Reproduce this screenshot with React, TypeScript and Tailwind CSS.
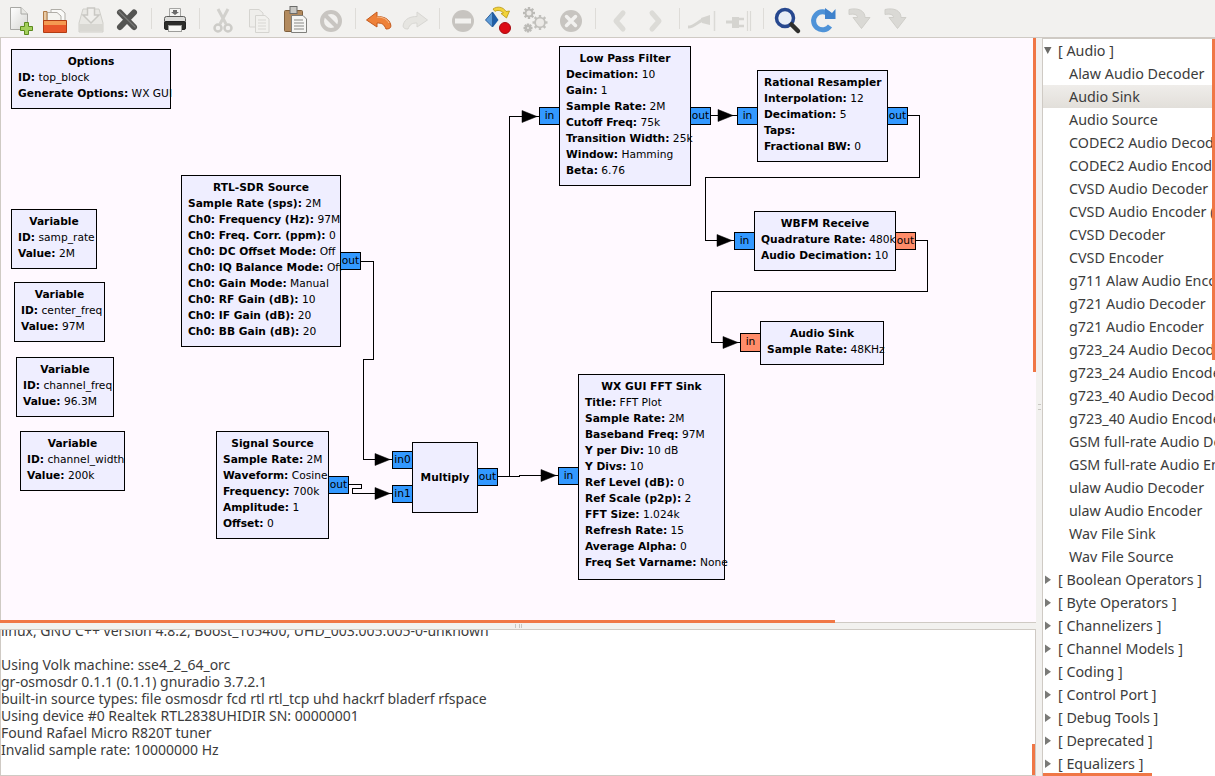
import React from "react";

const S = ({ children }: { children: React.ReactNode }) => (
  <svg width="32" height="32" viewBox="0 0 32 32" className="shrink-0">{children}</svg>
);

const gear = (cx: number, cy: number, r: number, color: string) => {
  const teeth = [0, 45, 90, 135, 180, 225, 270, 315];
  return (
    <g>
      {teeth.map((a) => (
        <rect key={a} x={cx - 1.2} y={cy - r - 2} width="2.400" height="3" fill={color} transform={`rotate(${a} ${cx} ${cy})`} />
      ))}
      <circle cx={cx} cy={cy} r={r - 0.6} fill="#eceae7" stroke={color} strokeWidth="1.800" />
    </g>
  );
};

const curved = (
  <S>
    <path d="M6 6.500C15 4.500 22 7.500 22 14.500H27L18.500 25.500L10 14.500H14.500C14.500 11.500 11 10.500 6 11.500Z" fill="#dad9d5" stroke="#cfcec9" strokeLinejoin="round" />
  </S>
);

const icons: Record<string, React.ReactNode> = {
  new: (
    <S>
      <defs>
        <linearGradient id="pg" x1="0" y1="0" x2="1" y2="1"><stop offset="0" stopColor="#ffffff" /><stop offset="1" stopColor="#d6d6d2" /></linearGradient>
      </defs>
      <path d="M7.500 4.500H18L24.500 11V26.500H7.500Z" fill="url(#pg)" stroke="#a8a8a4" />
      <path d="M18 4.500V11H24.500" fill="#e8e8e4" stroke="#a8a8a4" />
      <path d="M21.500 19.500H25.500V23.500H29.500V27.500H25.500V31.500H21.500V27.500H17.500V23.500H21.500Z" fill="#a4cf5c" stroke="#5c8a1e" />
    </S>
  ),
  open: (
    <S>
      <path d="M12 6.500H22L26 10V20H12Z" fill="#fafaf8" stroke="#b0aea8" />
      <path d="M8 9.500H18L22 13V20H8Z" fill="#f4f4f0" stroke="#b0aea8" />
      <path d="M4.500 8.500H8V18H4.500Z" fill="#e8c9a4" stroke="#b07a45" />
      <path d="M4.500 17.500H27.500V29.500H4.500Z" fill="#e8562a" stroke="#b23c14" />
      <path d="M5 18H27V22H5Z" fill="#f49a52" />
    </S>
  ),
  save: (
    <S>
      <path d="M8 6H24L28 20V29H4V20Z" fill="#e9e8e4" stroke="#d0cfca" />
      <path d="M4 21H28V28H4Z" fill="#d9d8d3" />
      <path d="M12.500 5V12H8L16 20L24 12H19.500V5Z" fill="#f0efec" stroke="#c9c8c3" strokeWidth="1.500" />
    </S>
  ),
  close: (
    <S>
      <path d="M9 9.500L23 24M23 9.500L9 24" stroke="#555553" strokeWidth="6" strokeLinecap="round" />
      <path d="M8 8.500L24 24" stroke="#7a7a78" strokeWidth="1.200" strokeLinecap="round" />
    </S>
  ),
  print: (
    <S>
      <path d="M10.500 5.500H21.500V14H10.500Z" fill="#f4f4f2" stroke="#a6a6a4" />
      <path d="M14 7H18V9H20L16 12L12 9H14Z" fill="#6a6a6a" />
      <rect x="5.500" y="13.500" width="21" height="7" rx="2" fill="#dcdcda" stroke="#5c5c5a" />
      <rect x="5.500" y="18.500" width="21" height="8" rx="1.500" fill="#2d2d2b" stroke="#222" />
      <rect x="9.500" y="22.500" width="13" height="6" fill="#f7f7f5" stroke="#9c9c9a" />
    </S>
  ),
  cut: (
    <S>
      <path d="M11 6L19 21M21 6L13 21" stroke="#d2d1cd" strokeWidth="3" />
      <circle cx="11" cy="25" r="3.500" fill="none" stroke="#cdccc8" strokeWidth="2.500" />
      <circle cx="21" cy="25" r="3.500" fill="none" stroke="#cdccc8" strokeWidth="2.500" />
    </S>
  ),
  copy: (
    <S>
      <path d="M6.500 6.500H16L20 10V24H6.500Z" fill="#efeeeb" stroke="#d5d4d0" />
      <path d="M12.500 12.500H22L26 16V29.500H12.500Z" fill="#f2f1ee" stroke="#d5d4d0" />
      <path d="M15 17H23M15 20H23M15 23H23M15 26H23" stroke="#d8d7d3" />
    </S>
  ),
  paste: (
    <S>
      <rect x="5.500" y="7.500" width="18" height="21" rx="1" fill="#b28a5e" stroke="#7f5f3c" />
      <rect x="11" y="3.500" width="7" height="7" fill="#c9c8c4" stroke="#6c6c6a" />
      <path d="M12.500 12.500H24L27.500 16V29.500H12.500Z" fill="#f6f6f4" stroke="#80807c" />
      <path d="M15 17H24M15 20H25M15 23H25M15 26H25" stroke="#8a8a86" />
    </S>
  ),
  stop: (
    <S>
      <circle cx="16" cy="18" r="9" fill="none" stroke="#c8c5c1" strokeWidth="4" />
      <path d="M9.500 11.500L22.500 24.500" stroke="#c8c5c1" strokeWidth="4" />
    </S>
  ),
  undo: (
    <S>
      <path d="M14 9L3.500 17L14 24V20C19 20 21 21 23 26C27.500 26 28.500 24 27.500 21C26 16 21 13.500 14 13.500Z" fill="#ee8139" stroke="#c4591c" strokeLinejoin="round" />
      <path d="M14 14C20 14 24 16 26 20" fill="none" stroke="#f8c090" />
    </S>
  ),
  redo: (
    <S>
      <path d="M18 9L28.500 17L18 24V20C13 20 11 21 9 26C4.500 26 3.500 24 4.500 21C6 16 11 13.500 18 13.500Z" fill="#e6e5e1" stroke="#d8d7d3" strokeLinejoin="round" />
    </S>
  ),
  minus: (
    <S>
      <circle cx="16" cy="18" r="11" fill="#c7c4c0" />
      <rect x="8" y="15.500" width="16" height="5" fill="#f2f1ef" />
    </S>
  ),
  rotate: (
    <S>
      <path d="M2.500 17L9.500 9L9.500 24Z" fill="#5d9ad6" stroke="#2c5f9a" />
      <path d="M10 9L15.500 17L10 24Z" fill="#1f5ea8" />
      <path d="M10 6C14 3 20 3.500 23 8.500L26.500 8L23.500 15L18 10.500L20.500 10C18.500 7.500 14 6.500 12 8.500Z" fill="#f2d33b" stroke="#b8960e" strokeWidth=".8" />
      <circle cx="22" cy="25" r="5.500" fill="#dc0c14" stroke="#a60a10" />
    </S>
  ),
  gears: (
    <S>
      {gear(10, 10, 4, "#bcbbb7")}
      {gear(21, 19.500, 5.500, "#c2c1bd")}
      {gear(9, 25, 2.500, "#bcbbb7")}
    </S>
  ),
  stopx: (
    <S>
      <circle cx="16" cy="18" r="11" fill="#c7c4c0" />
      <path d="M11.500 13.500L20.500 22.500M20.500 13.500L11.500 22.500" stroke="#f2f1ef" strokeWidth="3.500" strokeLinecap="round" />
    </S>
  ),
  left: (
    <S>
      <path d="M20 10L13 18L20 26" fill="none" stroke="#dcdbd7" strokeWidth="5" strokeLinejoin="round" strokeLinecap="round" />
    </S>
  ),
  right: (
    <S>
      <path d="M13 10L20 18L13 26" fill="none" stroke="#dcdbd7" strokeWidth="5" strokeLinejoin="round" strokeLinecap="round" />
    </S>
  ),
  plug: (
    <S>
      <path d="M1 24C8 24 11 18 16 17" fill="none" stroke="#d5d4d0" strokeWidth="3" />
      <path d="M14 15L23 12V22L15 20Z" fill="#d5d4d0" />
      <path d="M27.500 8V28" stroke="#dbdad6" strokeWidth="1.500" />
    </S>
  ),
  unplug: (
    <S>
      <path d="M3 19H9" stroke="#d5d4d0" strokeWidth="3" />
      <path d="M9 14H16V25H9Z" fill="#d5d4d0" />
      <path d="M16 16H21M16 23H21" stroke="#d5d4d0" strokeWidth="2.500" />
      <path d="M24.500 8V28M27.500 8V28" stroke="#dbdad6" strokeWidth="1.200" />
    </S>
  ),
  find: (
    <S>
      <circle cx="14" cy="15" r="8.500" fill="#e9eef6" stroke="#27488f" strokeWidth="3.500" />
      <path d="M20.500 21.500L27 28" stroke="#2f2f2d" strokeWidth="4.500" strokeLinecap="round" />
    </S>
  ),
  refresh: (
    <S>
      <path d="M22 11.500A9 9 0 1 0 23 23" fill="none" stroke="#4f93d8" strokeWidth="5" />
      <path d="M18 5V16H28.500V6L25 10Z" fill="#3f82cc" />
    </S>
  ),
  down1: curved,
  down2: curved,
};

const toolbar: string[][] = [
  ["new", "open", "save", "close"],
  ["print"],
  ["cut", "copy", "paste", "stop"],
  ["undo", "redo"],
  ["minus", "rotate", "gears", "stopx"],
  ["left", "right"],
  ["plug", "unplug"],
  ["find", "refresh", "down1", "down2"],
];

type Row = [string, string];
type BlockData = { x: number; y: number; w: number; h: number; title: string; rows: Row[] };

const blocks: BlockData[] = [
  { x: 11, y: 49, w: 160, h: 60, title: "Options", rows: [["ID:", "top_block"], ["Generate Options:", "WX GUI"]] },
  { x: 11, y: 209, w: 86, h: 60, title: "Variable", rows: [["ID:", "samp_rate"], ["Value:", "2M"]] },
  { x: 14, y: 282, w: 91, h: 60, title: "Variable", rows: [["ID:", "center_freq"], ["Value:", "97M"]] },
  { x: 16, y: 357, w: 98, h: 60, title: "Variable", rows: [["ID:", "channel_freq"], ["Value:", "96.3M"]] },
  { x: 20, y: 431, w: 105, h: 60, title: "Variable", rows: [["ID:", "channel_width"], ["Value:", "200k"]] },
  {
    x: 181, y: 175, w: 160, h: 172, title: "RTL-SDR Source",
    rows: [
      ["Sample Rate (sps):", "2M"], ["Ch0: Frequency (Hz):", "97M"], ["Ch0: Freq. Corr. (ppm):", "0"],
      ["Ch0: DC Offset Mode:", "Off"], ["Ch0: IQ Balance Mode:", "Off"], ["Ch0: Gain Mode:", "Manual"],
      ["Ch0: RF Gain (dB):", "10"], ["Ch0: IF Gain (dB):", "20"], ["Ch0: BB Gain (dB):", "20"],
    ],
  },
  {
    x: 216, y: 431, w: 113, h: 108, title: "Signal Source",
    rows: [["Sample Rate:", "2M"], ["Waveform:", "Cosine"], ["Frequency:", "700k"], ["Amplitude:", "1"], ["Offset:", "0"]],
  },
  {
    x: 559, y: 46, w: 132, h: 140, title: "Low Pass Filter",
    rows: [["Decimation:", "10"], ["Gain:", "1"], ["Sample Rate:", "2M"], ["Cutoff Freq:", "75k"], ["Transition Width:", "25k"], ["Window:", "Hamming"], ["Beta:", "6.76"]],
  },
  {
    x: 757, y: 70, w: 131, h: 92, title: "Rational Resampler",
    rows: [["Interpolation:", "12"], ["Decimation:", "5"], ["Taps:", ""], ["Fractional BW:", "0"]],
  },
  { x: 754, y: 211, w: 142, h: 60, title: "WBFM Receive", rows: [["Quadrature Rate:", "480k"], ["Audio Decimation:", "10"]] },
  { x: 760, y: 321, w: 124, h: 44, title: "Audio Sink", rows: [["Sample Rate:", "48KHz"]] },
  {
    x: 578, y: 374, w: 147, h: 206, title: "WX GUI FFT Sink",
    rows: [
      ["Title:", "FFT Plot"], ["Sample Rate:", "2M"], ["Baseband Freq:", "97M"], ["Y per Div:", "10 dB"], ["Y Divs:", "10"],
      ["Ref Level (dB):", "0"], ["Ref Scale (p2p):", "2"], ["FFT Size:", "1.024k"], ["Refresh Rate:", "15"], ["Average Alpha:", "0"], ["Freq Set Varname:", "None"],
    ],
  },
];

const ports: { x: number; y: number; w: number; h: number; t: string; orange?: boolean }[] = [
  { x: 340, y: 252, w: 21, h: 18, t: "out" },
  { x: 328, y: 476, w: 21, h: 18, t: "out" },
  { x: 392, y: 451, w: 21, h: 18, t: "in0" },
  { x: 392, y: 485, w: 21, h: 18, t: "in1" },
  { x: 477, y: 468, w: 21, h: 18, t: "out" },
  { x: 558, y: 467, w: 21, h: 18, t: "in" },
  { x: 539, y: 107, w: 21, h: 18, t: "in" },
  { x: 690, y: 107, w: 21, h: 18, t: "out" },
  { x: 737, y: 107, w: 21, h: 18, t: "in" },
  { x: 887, y: 107, w: 21, h: 18, t: "out" },
  { x: 734, y: 232, w: 21, h: 18, t: "in" },
  { x: 895, y: 232, w: 21, h: 18, t: "out", orange: true },
  { x: 740, y: 333, w: 21, h: 19, t: "in", orange: true },
];

const wires = [
  "M361 261.500H373.500V359.500H363.500V459.500H392",
  "M349 484.500H361.500V488.500H352.500V493.500H392",
  "M498 476.500H519.500V475.500H558",
  "M509.500 476V116.500H539",
  "M711 115.500H737",
  "M908 115.500H919.500V177.500H705.500V240.500H734",
  "M916 240.500H927.500V291.500H711.500V342.500H740",
];

const arrows: [number, number][] = [
  [390, 459], [390, 493], [556, 475], [537, 116], [733, 115], [732, 240], [738, 342],
];

const audio = [
  "Alaw Audio Decoder", "Audio Sink", "Audio Source", "CODEC2 Audio Decoder", "CODEC2 Audio Encoder",
  "CVSD Audio Decoder", "CVSD Audio Encoder (", "CVSD Decoder", "CVSD Encoder", "g711 Alaw Audio Encoder",
  "g721 Audio Decoder", "g721 Audio Encoder", "g723_24 Audio Decoder", "g723_24 Audio Encoder", "g723_40 Audio Decoder",
  "g723_40 Audio Encoder", "GSM full-rate Audio De", "GSM full-rate Audio Enc", "ulaw Audio Decoder", "ulaw Audio Encoder",
  "Wav File Sink", "Wav File Source",
];
const cats = ["Boolean Operators", "Byte Operators", "Channelizers", "Channel Models", "Coding", "Control Port", "Debug Tools", "Deprecated", "Equalizers"];

const logLines = [
  "linux, GNU C++ version 4.8.2, Boost_105400, UHD_003.005.005-0-unknown",
  "",
  "Using Volk machine: sse4_2_64_orc",
  "gr-osmosdr 0.1.1 (0.1.1) gnuradio 3.7.2.1",
  "built-in source types: file osmosdr fcd rtl rtl_tcp uhd hackrf bladerf rfspace",
  "Using device #0 Realtek RTL2838UHIDIR SN: 00000001",
  "Found Rafael Micro R820T tuner",
  "Invalid sample rate: 10000000 Hz",
];

function Block({ b }: { b: BlockData }) {
  return (
    <div
      className="absolute flex flex-col border border-black bg-[#efeeff] pl-[6px] pt-[4px] leading-[16px] whitespace-nowrap"
      style={{ left: b.x, top: b.y, width: b.w, height: b.h }}
    >
      <div className="pr-[6px] text-center font-bold">{b.title}</div>
      {b.rows.map((r, i) => (
        <div key={i}>
          <span className="font-bold">{r[0]}</span>
          {r[1] ? " " + r[1] : ""}
        </div>
      ))}
    </div>
  );
}

function Category({ cat, open, label }: { cat?: boolean; open?: boolean; label: string }) {
  return (
    <div className="flex h-[23px] items-center pl-[1px]">
      <svg width="8" height="10" viewBox="0 0 8 10" className="shrink-0">
        {open ? <path d="M0 1H7.500L3.750 8Z" fill="#6b6b68" /> : <path d="M1 0.500L7 4.750L1 9Z" fill="#7a7a77" />}
      </svg>
      <span className="ml-[6px]">{cat ? `[ ${label} ]` : label}</span>
    </div>
  );
}

export default function App() {
  return (
    <div className="flex h-[776px] w-[1215px] flex-col overflow-hidden bg-[#f2f1ef] text-[14px] text-[#3c3c3c] [font-family:'Noto_Sans','Open_Sans',sans-serif]">
      <div className="flex h-[38px] shrink-0 items-center border-b border-[#cfcac4] pl-[1px]">
        {toolbar.map((g, i) => (
          <React.Fragment key={i}>
            {i > 0 && (
              <div className="flex h-[21px] w-[12px] shrink-0 justify-center">
                <div className="w-px bg-[#dedcd8]" />
              </div>
            )}
            {g.map((n) => (
              <div key={n} className="flex h-[37px] w-[36px] shrink-0 items-center justify-center">
                {icons[n]}
              </div>
            ))}
          </React.Fragment>
        ))}
      </div>

      <div className="flex min-h-0 flex-1">
        <div className="relative flex w-[1036px] shrink-0 flex-col">
          <div className="relative h-[585px] shrink-0 overflow-hidden border-l border-b border-[#cfcac4] bg-[#fff9ff]">
            <div className="absolute left-[-1px] top-[-38px] h-[776px] w-[1215px] text-[10.67px] text-black [font-family:'DejaVu_Sans',sans-serif]">
              <svg className="absolute left-0 top-0" width="1215" height="776">
                {wires.map((d) => (
                  <path key={d} d={d} fill="none" stroke="#000" strokeWidth="1" shapeRendering="crispEdges" />
                ))}
                {arrows.map(([x, y]) => (
                  <path key={`${x}-${y}`} d={`M${x} ${y + 0.5}L${x - 15} ${y - 5.5}V${y + 6.5}Z`} fill="#000" stroke="#000" strokeWidth=".5" />
                ))}
              </svg>
              {blocks.map((b) => (
                <Block key={b.title + b.x} b={b} />
              ))}
              <div className="absolute left-[412px] top-[442px] flex h-[71px] w-[66px] items-center justify-center border border-black bg-[#efeeff] font-bold">
                Multiply
              </div>
              {ports.map((p) => (
                <div
                  key={`${p.x}-${p.y}`}
                  className={`absolute flex items-center justify-center border border-black leading-none ${p.orange ? "bg-[#ff8c69]" : "bg-[#3399ff]"}`}
                  style={{ left: p.x, top: p.y, width: p.w, height: p.h }}
                >
                  {p.t}
                </div>
              ))}
            </div>
            <div className="absolute right-0 top-0 h-[334px] w-[3px] bg-[#f07746]" />
          </div>
          <div className="absolute left-0 top-[582px] h-[3px] w-[835px] bg-[#f07746]" />
          <div className="relative flex h-[6px] shrink-0 items-center justify-center">
            <div className="h-[4px] w-[7px] border-x border-[#c8c6c2] bg-[linear-gradient(90deg,transparent_3px,#c8c6c2_3px,#c8c6c2_4px,transparent_4px)]" />
          </div>
          <div className="relative min-h-0 flex-1 overflow-hidden border border-[#cfcac4] bg-white leading-[17px] text-[#3c3c3c]">
            <div className="mt-[-8px]">
              {logLines.map((l, i) => (
                <div key={i} className="h-[17px] whitespace-nowrap">{l}</div>
              ))}
            </div>
            <div className="absolute bottom-0 right-0 h-[31px] w-[3px] bg-[#f07746]" />
          </div>
        </div>

        <div className="flex w-[6px] shrink-0 items-center justify-center pb-[1px]">
          <div className="h-[6px] w-[3px] border-y border-[#c8c6c2]" />
        </div>

        <div className="relative min-w-0 flex-1 overflow-hidden border-l border-t border-[#cfcac4] bg-white text-[14.3px]">
          <div className="whitespace-nowrap leading-[23px]">
            <Category open label="Audio" cat />
            {audio.map((a) => (
              <div
                key={a}
                className={`h-[23px] pl-[26px] ${a === "Audio Sink" ? "bg-[linear-gradient(#efedea,#e2dfda)]" : ""}`}
              >
                {a}
              </div>
            ))}
            {cats.map((c) => (
              <Category key={c} cat label={c} />
            ))}
          </div>
          <div className="absolute right-0 top-0 h-[321px] w-[3px] bg-[#f07746]" />
          <div className="absolute bottom-0 left-0 h-[3px] w-[109px] bg-[#f07746]" />
        </div>
      </div>
    </div>
  );
}
